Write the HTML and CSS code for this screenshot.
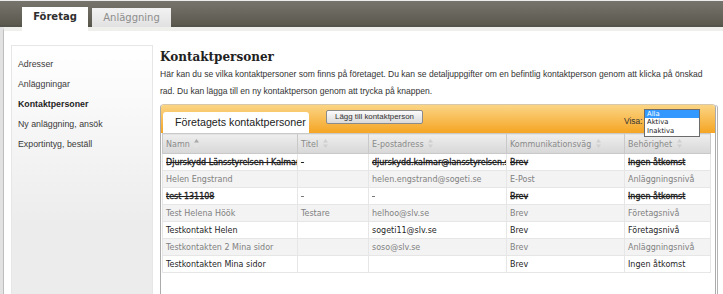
FILE: index.html
```html
<!DOCTYPE html>
<html lang="sv">

<head>
    <meta charset="UTF-8">
    <meta name="viewport" content="width=device-width, initial-scale=1.0">
    <title>Kontaktpersoner</title>
    <link rel="stylesheet" href="styles.css">
</head>

<body>
    <div class="topbar">
        <div class="tab active">Företag</div>
        <div class="tab">Anläggning</div>
    </div>

    <div class="page">
        <div class="sidebar">
            <ul class="menu">
                <li>Adresser</li>
                <li>Anläggningar</li>
                <li class="current">Kontaktpersoner</li>
                <li>Ny anläggning, ansök</li>
                <li>Exportintyg, beställ</li>
            </ul>
        </div>

        <div class="main">
            <h1>Kontaktpersoner</h1>
            <p class="intro">Här kan du se vilka kontaktpersoner som finns på företaget. Du kan se detaljuppgifter om en befintlig kontaktperson genom att klicka på önskad rad. Du kan lägga till en ny kontaktperson genom att trycka på knappen.</p>

            <div class="panel">
                <div class="panel-head">
                    <div class="panel-tab">Företagets kontaktpersoner</div>
                    <button class="add-btn">Lägg till kontaktperson</button>
                    <div class="filter">
                        <span class="filter-label">Visa:</span>
                        <div class="select">
                            <!-- open dropdown -->
                            <ul class="listbox">
                                <li class="selected">Alla</li>
                                <li>Aktiva</li>
                                <li>Inaktiva</li>
                            </ul>
                        </div>
                    </div>
                </div>

                <div class="panel-body">
                    <table class="grid">
                        <colgroup>
                            <col class="c-name">
                            <col class="c-title">
                            <col class="c-mail">
                            <col class="c-way">
                            <col class="c-role">
                        </colgroup>
                        <tr>
                            <th>Namn <svg class="sort" viewBox="0 0 5 9"><path d="M2.5 0L5 3.5H0z" fill="#a8a8a8"/><path d="M2.5 9L0 5.5H5z" fill="#e2e2e2"/></svg></th>
                            <th>Titel <svg class="sort" viewBox="0 0 5 9"><path d="M2.5 0L5 3.5H0z" fill="#cfcfcf"/><path d="M2.5 9L0 5.5H5z" fill="#cfcfcf"/></svg></th>
                            <th>E-postadress <svg class="sort" viewBox="0 0 5 9"><path d="M2.5 0L5 3.5H0z" fill="#cfcfcf"/><path d="M2.5 9L0 5.5H5z" fill="#cfcfcf"/></svg></th>
                            <th>Kommunikationsväg <svg class="sort" viewBox="0 0 5 9"><path d="M2.5 0L5 3.5H0z" fill="#cfcfcf"/><path d="M2.5 9L0 5.5H5z" fill="#cfcfcf"/></svg></th>
                            <th>Behörighet <svg class="sort" viewBox="0 0 5 9"><path d="M2.5 0L5 3.5H0z" fill="#cfcfcf"/><path d="M2.5 9L0 5.5H5z" fill="#cfcfcf"/></svg></th>
                        </tr>
                        <tr class="removed">
                            <td>Djurskydd Länsstyrelsen i Kalmar</td>
                            <td>-</td>
                            <td>djurskydd.kalmar@lansstyrelsen.se</td>
                            <td>Brev</td>
                            <td>Ingen åtkomst</td>
                        </tr>
                        <tr class="inactive">
                            <td>Helen Engstrand</td>
                            <td></td>
                            <td>helen.engstrand@sogeti.se</td>
                            <td>E-Post</td>
                            <td>Anläggningsnivå</td>
                        </tr>
                        <tr class="removed">
                            <td>test 131108</td>
                            <td class="dash">-</td>
                            <td class="dash">-</td>
                            <td>Brev</td>
                            <td>Ingen åtkomst</td>
                        </tr>
                        <tr class="inactive">
                            <td>Test Helena Höök</td>
                            <td>Testare</td>
                            <td>helhoo@slv.se</td>
                            <td>Brev</td>
                            <td>Företagsnivå</td>
                        </tr>
                        <tr>
                            <td>Testkontakt Helen</td>
                            <td></td>
                            <td>sogeti11@slv.se</td>
                            <td>Brev</td>
                            <td>Företagsnivå</td>
                        </tr>
                        <tr class="inactive">
                            <td>Testkontakten 2 Mina sidor</td>
                            <td></td>
                            <td>soso@slv.se</td>
                            <td>Brev</td>
                            <td>Anläggningsnivå</td>
                        </tr>
                        <tr>
                            <td>Testkontakten Mina sidor</td>
                            <td></td>
                            <td></td>
                            <td>Brev</td>
                            <td>Ingen åtkomst</td>
                        </tr>
                    </table>
                </div>
            </div>
        </div>
    </div>
</body>

</html>
```

FILE: styles.css
```css
body {
    margin: 0;
    background: #e2e2e2;
    font-family: "Liberation Sans", Arial, sans-serif;
    overflow: hidden;
}

/* top tabs */
.topbar {
    display: flex;
    align-items: flex-end;
    height: 24px;
    padding-left: 22px;
    border-top: 1px solid #ececec;
    border-bottom: 2px solid #55544a;
    background: linear-gradient(#77746d, #5b594e);
}

.tab {
    height: 19px;
    width: 79px;
    margin-left: 4px;
    margin-bottom: -2px;
    background: linear-gradient(#f2f2f2, #e1e1e1);
    color: #8d8d8d;
    font-family: "DejaVu Sans", Verdana, sans-serif;
    font-size: 10px;
    line-height: 19px;
    text-align: center;
}

.tab.active {
    position: relative;
    z-index: 1;
    width: 66px;
    height: 24px;
    margin-left: 0;
    margin-bottom: -6px;
    background: #fff;
    color: #2e2e2e;
    font-weight: bold;
    line-height: 20px;
}

/* page */
.page {
    display: flex;
    gap: 7px;
    min-height: 300px;
    margin-left: 3px;
    padding: 14px 7px 0 7px;
    border-left: 1px solid #bdbdbd;
    border-top: 4px solid #efefeb;
    background: #fff;
}

.sidebar {
    flex: 0 0 142px;
    box-sizing: border-box;
    min-height: 280px;
    border: 1px solid #e6e6e6;
    background: linear-gradient(#ffffff, #ececec 180px);
}

.menu {
    list-style: none;
    margin: 0;
    padding: 8px 0 0 6px;
    font-size: 8.8px;
    line-height: 20px;
    color: #3a3a3a;
}

.menu .current {
    font-weight: bold;
    color: #1e1e1e;
}

.main {
    flex: 1;
    padding-top: 5px;
}

h1 {
    margin: 0;
    font-family: "DejaVu Serif", Georgia, serif;
    font-size: 12px;
    line-height: 14px;
    color: #222;
}

.intro {
    margin: 2px 0 0;
    font-size: 8.55px;
    line-height: 17px;
    color: #333;
}

/* orange panel */
.panel {
    margin-top: 4px;
    border: 1px solid #ababab;
    border-top-color: #d7c8ab;
    border-radius: 4px 4px 0 0;
    box-shadow: 2px 0 0 -1px #fff, 3px 0 0 -1px #b4b4b4;
}

.panel-head {
    display: flex;
    align-items: flex-start;
    height: 28px;
    border-radius: 3px 3px 0 0;
    background: linear-gradient(#fbd585, #f5a524);
}

.panel-tab {
    box-sizing: border-box;
    width: 146px;
    height: 21px;
    margin: 7px 0 0 2px;
    padding-left: 12px;
    border-radius: 3px 3px 0 0;
    background: #fff;
    color: #222;
    font-size: 10.7px;
    line-height: 21px;
}

.add-btn {
    height: 14px;
    margin: 5px 0 0 17px;
    padding: 0 8px;
    border: 1px solid #8b8b8b;
    border-radius: 2px;
    background: linear-gradient(#fbfbfb, #dadada);
    color: #333;
    font-family: "Liberation Sans", Arial, sans-serif;
    font-size: 7.9px;
    line-height: 12px;
}

.filter {
    display: flex;
    margin: 4px 15px 0 auto;
}

.filter-label {
    margin-top: 7px;
    width: 20px;
    font-size: 8.4px;
    line-height: 10px;
    color: #333;
}

.select {
    position: relative;
    width: 56px;
    height: 12px;
}

.listbox {
    position: absolute;
    z-index: 2;
    top: 0;
    left: 0;
    width: 54px;
    margin: 0;
    padding: 0 0 1px;
    list-style: none;
    border: 1px solid #6b6b6b;
    background: #fff;
    font-family: "DejaVu Sans", Verdana, sans-serif;
    font-size: 6.8px;
    line-height: 8.4px;
    color: #222;
}

.listbox li {
    padding-left: 2px;
}

.listbox .selected {
    background: #3399ff;
    color: #fff;
}

/* table */
.panel-body {
    min-height: 170px;
    padding: 0 4px 0 1px;
    background: #fff;
}

.grid {
    width: 548px;
    table-layout: fixed;
    border-collapse: collapse;
    font-family: "DejaVu Sans", Verdana, sans-serif;
    font-size: 8px;
}

.c-name { width: 135px; }
.c-title { width: 71px; }
.c-mail { width: 138px; }
.c-way { width: 118px; }
.c-role { width: 86px; }

.grid th {
    height: 19px;
    padding: 0 3px;
    border: 1px solid #c9c9c9;
    background: linear-gradient(#eeeeee, #d7d7d7);
    color: #8a8a8a;
    font-weight: normal;
    text-align: left;
    white-space: nowrap;
}

.sort {
    width: 5px;
    height: 9px;
    margin-left: 2px;
    vertical-align: -1px;
}

.grid td {
    height: 16px;
    padding: 0 3px;
    border: 1px solid #e6e6e6;
    border-top: none;
    color: #1f1f1f;
    white-space: nowrap;
    overflow: hidden;
}

.grid tr:nth-child(odd) td {
    background: #f3f3f3;
}

.grid tr:nth-child(even) td {
    background: #fff;
}

.grid tr.inactive td {
    color: #818181;
}

.grid tr.removed td {
    color: #222;
    text-decoration: line-through;
    -webkit-text-stroke: 0.3px #222;
}

.grid tr.removed td.dash {
    color: #777;
    -webkit-text-stroke: 0;
}
```
